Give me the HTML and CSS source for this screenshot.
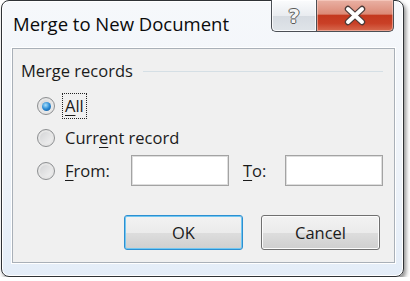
FILE: index.html
```html
<!DOCTYPE html>
<html lang="en">
<head>
  <meta charset="UTF-8">
  <title>Merge to New Document</title>
  <link rel="stylesheet" href="styles.css">
</head>
<body>
  <div class="window">
    <!-- title bar -->
    <div class="titlebar">
      <span class="title">Merge to New Document</span>
      <div class="caption-buttons">
        <span class="cap-btn help">?</span>
        <span class="cap-btn close">
          <svg width="24" height="22" viewBox="0 0 24 22">
            <path d="M5 4 L19 17 M19 4 L5 17" stroke="#4a3a38" stroke-width="6.4" stroke-linecap="round" fill="none"/>
            <path d="M5 4 L19 17 M19 4 L5 17" stroke="#fff" stroke-width="4" stroke-linecap="round" fill="none"/>
          </svg>
        </span>
      </div>
    </div>

    <!-- dialog body -->
    <div class="content">
      <div class="group-head">
        <span>Merge records</span>
        <span class="rule"></span>
      </div>

      <div class="options">
        <div class="option">
          <span class="radio checked"></span>
          <span class="label focused"><u>A</u>ll</span>
        </div>
        <div class="option">
          <span class="radio"></span>
          <span class="label">Curr<u>e</u>nt record</span>
        </div>
        <div class="option">
          <span class="radio"></span>
          <span class="label from-label"><u>F</u>rom:</span>
          <span class="field"></span>
          <span class="to-label"><u>T</u>o:</span>
          <span class="field"></span>
        </div>
      </div>

      <div class="actions">
        <button class="btn default">OK</button>
        <button class="btn">Cancel</button>
      </div>
    </div>
  </div>
</body>
</html>
```

FILE: styles.css
```css
* { box-sizing: border-box; margin: 0; padding: 0; }

body {
  background: #fff;
  font-family: 'Open Sans', 'Noto Sans', sans-serif;
  font-size: 16.5px;
  color: #1b1b1b;
}

/* window frame */
.window {
  width: 403px;
  height: 277px;
  margin-left: 1px;
  border: 1px solid #2f3236;
  border-radius: 8px;
  background: linear-gradient(#f6f8fb, #eef3f9 60%, #e4edf8);
  box-shadow: inset 0 0 0 1px #fff, 2px 3px 4px rgba(0,0,0,0.45);
  display: flex;
  flex-direction: column;
}

.titlebar {
  height: 47px;
  display: flex;
  align-items: flex-start;
}

.title {
  padding: 13px 0 0 11px;
  line-height: 20px;
  font-size: 18.5px;
  color: #0a0a0a;
}

.caption-buttons {
  margin-left: auto;
  margin-right: 9px;
  margin-top: -1px;
  display: flex;
}

.cap-btn {
  height: 32px;
  display: flex;
  align-items: center;
  justify-content: center;
  border: 1px solid #4b4f55;
  border-top: none;
}

.help {
  width: 45px;
  border-right: none;
  border-bottom-left-radius: 5px;
  background: linear-gradient(#fbfcfd, #e9ecf0 50%, #d6dbe1 52%, #dfe4e9);
  box-shadow: inset 0 0 0 1px rgba(255,255,255,0.8);
  font-family: 'DejaVu Sans', sans-serif;
  font-weight: bold;
  font-size: 20px;
  color: #f4f4f4;
  text-shadow: 1px 0 #5a5a5a, -1px 0 #5a5a5a, 0 1px #5a5a5a, 0 -1px #5a5a5a;
}

.close {
  width: 78px;
  border-bottom-right-radius: 5px;
  background: linear-gradient(#e9b1a4, #dc8a77 45%, #c4391f 50%, #c93f26 75%, #d76a4f);
  box-shadow: inset 0 0 0 1px rgba(255,220,210,0.5);
}

/* client area */
.content {
  height: 215px;
  margin-left: 10px;
  width: 383px;
  background: #f0f0f0;
  border: 1px solid #a9b0b8;
  box-shadow: 0 0 0 1px #fff;
  padding-top: 12px;
  display: flex;
  flex-direction: column;
}

.group-head {
  display: flex;
  align-items: center;
  height: 20px;
  line-height: 20px;
  padding-left: 8px;
}

.rule {
  flex: 1;
  height: 1px;
  background: #d5dfe5;
  margin: 0 11px 0 10px;
}

.options {
  margin-top: 9px;
  padding-left: 24px;
}

.option {
  display: flex;
  align-items: center;
  height: 32px;
  line-height: 20px;
}

.option:last-child { height: 33px; }

u { text-underline-offset: 3px; }

.radio {
  width: 18px;
  height: 18px;
  border-radius: 50%;
  border: 1px solid #8d8f91;
  background: linear-gradient(135deg, #cfd0d2, #f6f6f6);
  box-shadow: inset 0 0 0 2px #e6e6e6;
  display: flex;
  align-items: center;
  justify-content: center;
}

.radio.checked::after {
  content: '';
  width: 9px;
  height: 9px;
  border-radius: 50%;
  background: radial-gradient(circle at 40% 35%, #a9e0fb, #2a8ad4 50%, #0c4d8c);
}

.label { margin-left: 10px; }

.label.focused {
  margin-left: 7px;
  padding: 2px 2px;
  border: 1px dotted #222;
}

.from-label { width: 66px; }

.field {
  width: 98px;
  height: 31px;
  background: #fff;
  border: 1px solid #a3a3a3;
  box-shadow: inset 0 0 0 1px #dedede;
}

.to-label {
  width: 42px;
  margin-left: 14px;
}

.actions {
  margin-top: 28px;
  display: flex;
  justify-content: flex-end;
  gap: 18px;
  padding-right: 14px;
}

.btn {
  width: 119px;
  height: 35px;
  font: inherit;
  color: #1b1b1b;
  border: 1px solid #707070;
  border-radius: 3px;
  background: linear-gradient(#f2f2f2, #ebebeb 50%, #dddddd 51%, #cfcfcf);
  box-shadow: inset 0 0 0 1px #fcfcfc;
}

.btn.default {
  border-color: #2c8fd1;
  box-shadow: inset 0 0 0 1px #72c7f1;
}
```
